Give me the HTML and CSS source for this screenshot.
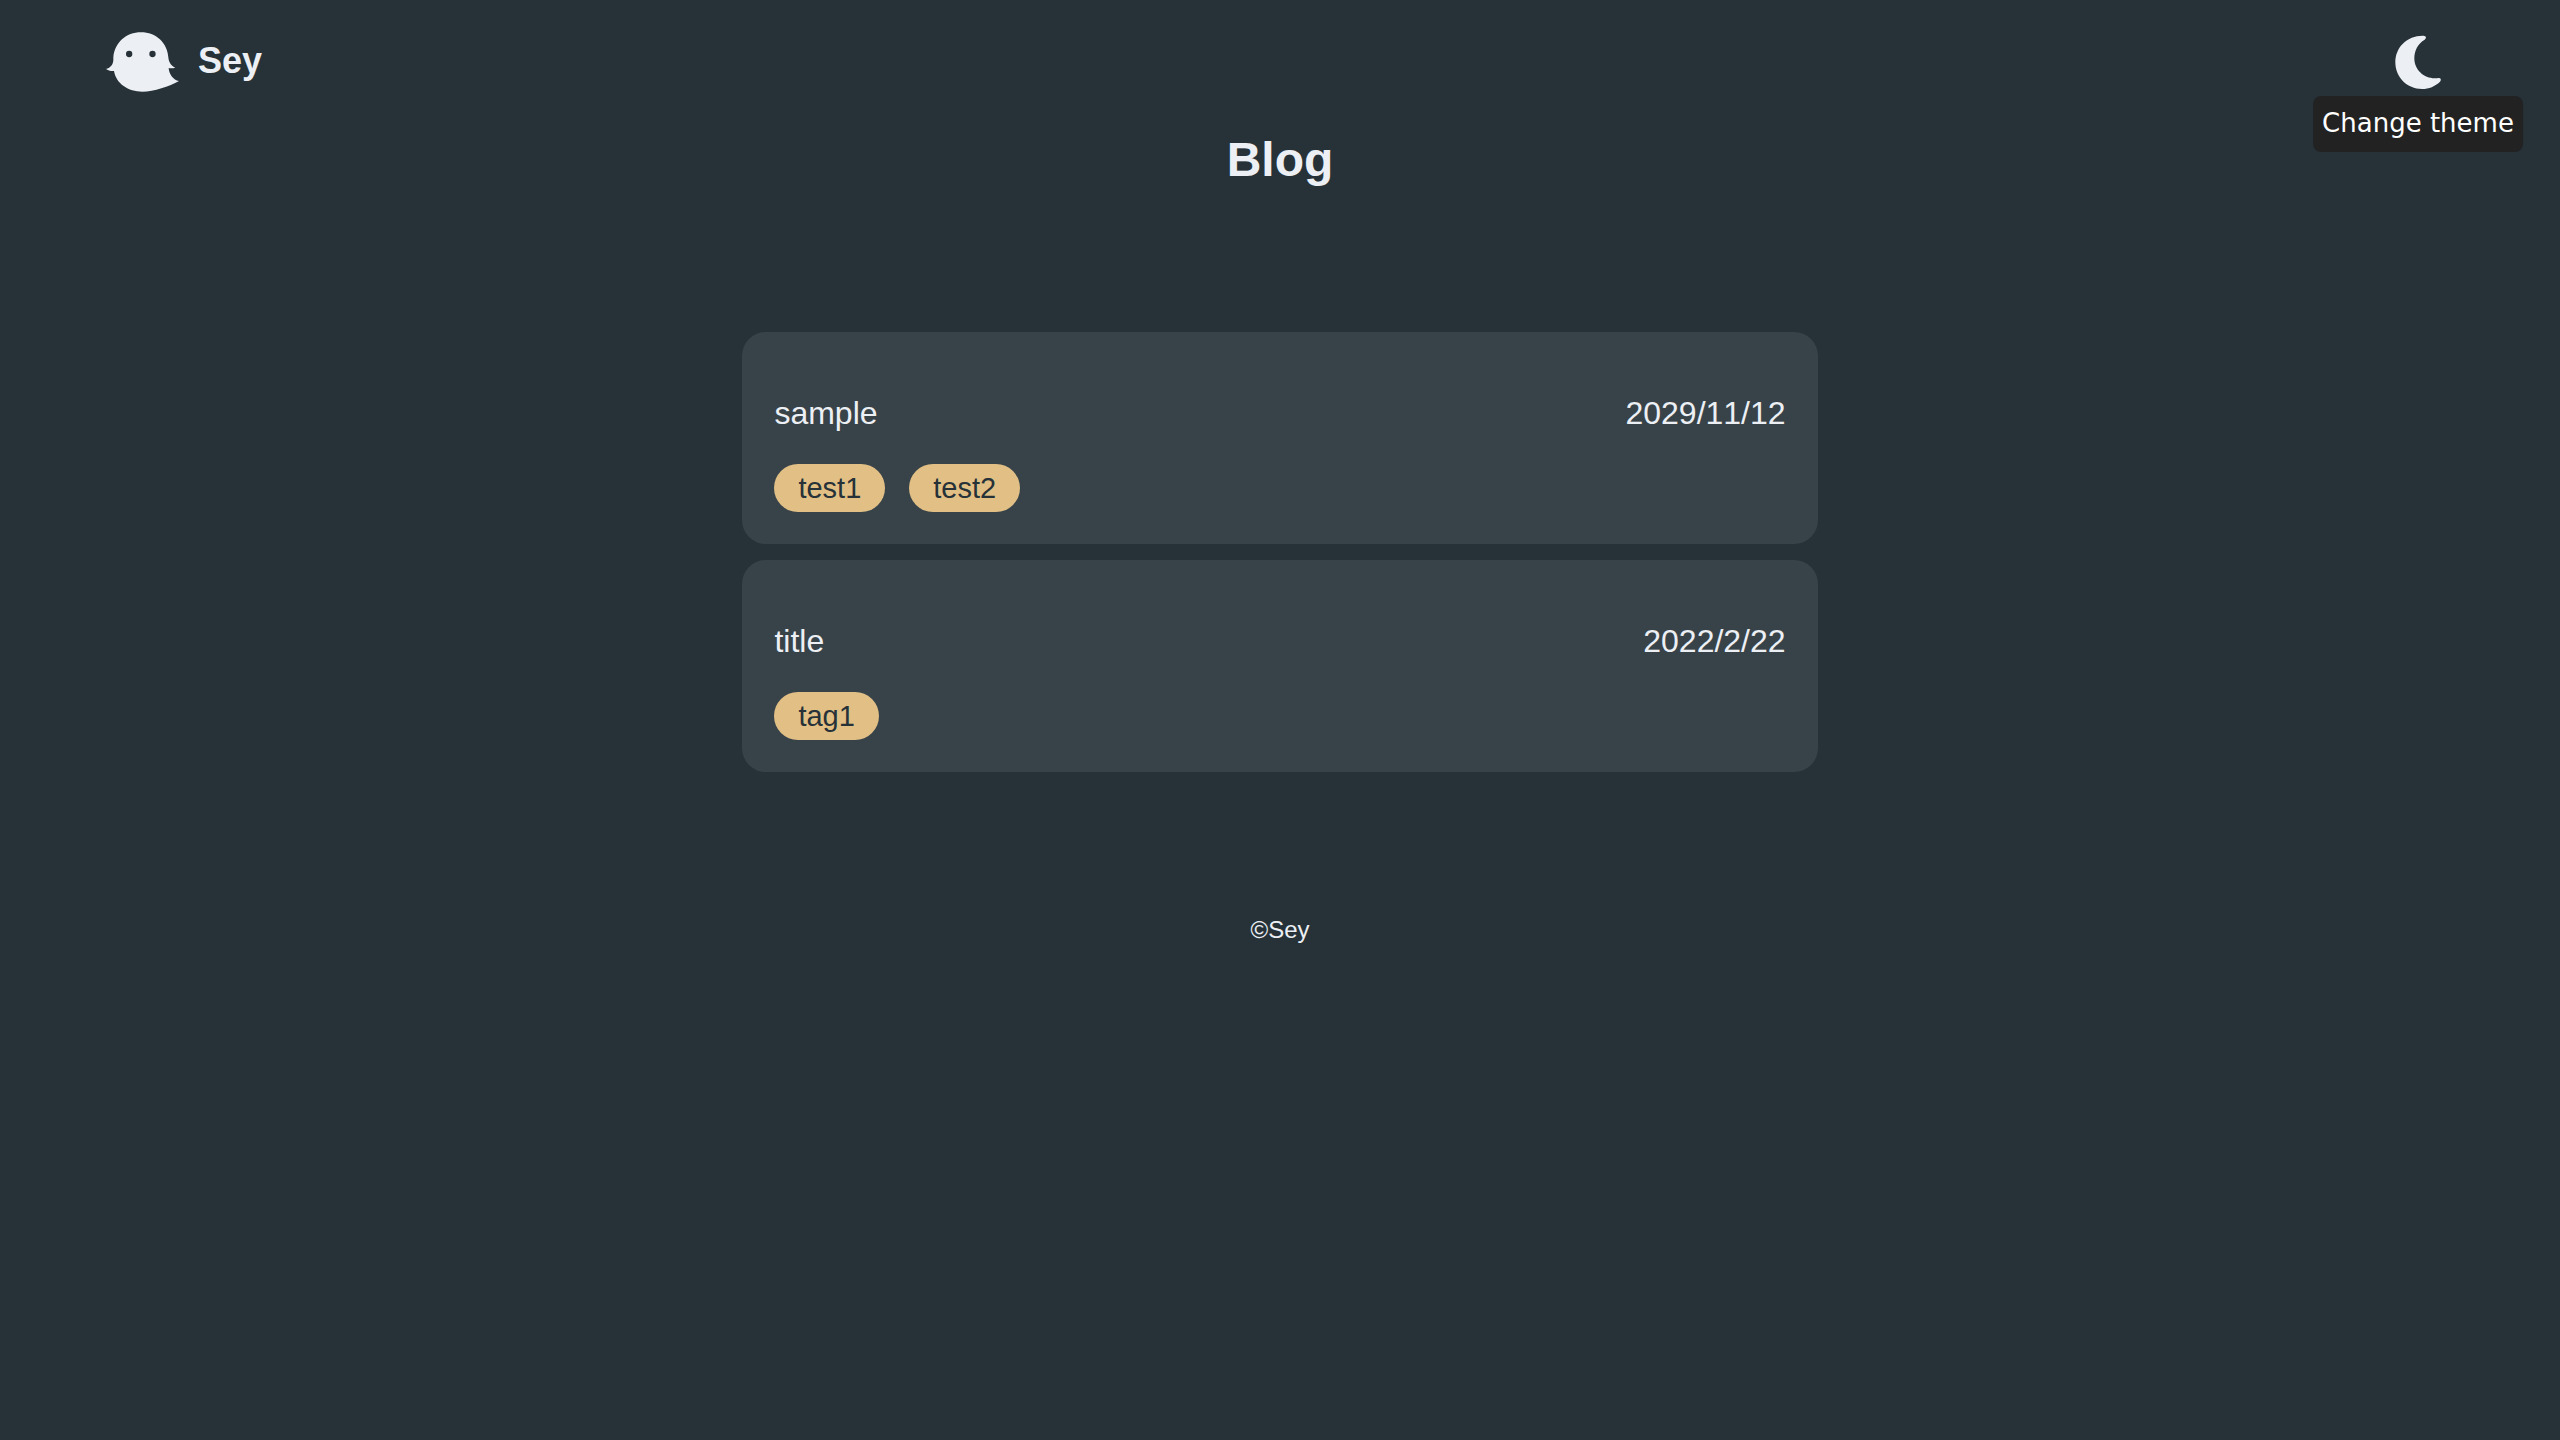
FILE: index.html
```html
<!DOCTYPE html>
<html lang="en">
<head>
<meta charset="utf-8">
<meta name="viewport" content="width=device-width, initial-scale=1">
<title>Blog</title>
<link rel="stylesheet" href="styles.css">
</head>
<body>
<header class="site-header">
  <a class="brand" href="#">
    <svg class="brand-logo" viewBox="48 36 219 180" aria-hidden="true">
      <path class="ghost" d="M70 112C74 68 108 37 153 37C198 37 232 68 235 112C236 126 244 139 256 143C249 145 241 145 236 144C237 162 250 180 267 183C238 199 192 215 157 215C115 215 78 191 72 153C62 154 54 151 48 147C60 144 69 136 70 120Z"/>
      <circle class="eye" cx="117.5" cy="102" r="9.5"/>
      <circle class="eye" cx="187.5" cy="102" r="9.5"/>
    </svg>
    <span class="brand-name">Sey</span>
  </a>
  <button class="theme-toggle" type="button" aria-describedby="theme-tip">
    <svg class="moon" viewBox="315 44 138 162" role="img" aria-label="Dark">
      <path d="M400 46C408 46 411 53 404 58C384 70 373 90 373 114C373 149 402 174 434 174C440 174 443 173 447 173C453 173 454 179 450 184C435 198 417 206 396 206C351 206 316 171 316 126C316 80 352 45 400 46Z"/>
    </svg>
    <span class="tooltip" id="theme-tip" role="tooltip">Change theme</span>
  </button>
</header>
<main class="content">
  <h1 class="page-title">Blog</h1>
  <div class="posts">
    <article class="post">
      <div class="post-head">
        <a class="post-title" href="#">sample</a>
        <time class="post-date" datetime="2029-11-12">2029/11/12</time>
      </div>
      <div class="tags">
        <a class="tag" href="#">test1</a>
        <a class="tag" href="#">test2</a>
      </div>
    </article>
    <article class="post">
      <div class="post-head">
        <a class="post-title" href="#">title</a>
        <time class="post-date" datetime="2022-02-22">2022/2/22</time>
      </div>
      <div class="tags">
        <a class="tag" href="#">tag1</a>
      </div>
    </article>
  </div>
</main>
<footer class="site-footer">©Sey</footer>
</body>
</html>
```
FILE: styles.css
```css
:root {
  --bg: #263238;
  --card: #384349;
  --text: #eceff4;
  --accent: #e2c085;
}

* {
  box-sizing: border-box;
}

body {
  margin: 0;
  background: var(--bg);
  color: var(--text);
  font-family: "Liberation Sans", Arial, sans-serif;
}

a {
  color: inherit;
  text-decoration: none;
}

.site-header {
  display: flex;
  justify-content: space-between;
  align-items: center;
  padding: 32px 119px 0 106px;
}

.brand {
  display: flex;
  gap: 19px;
}

.brand-logo {
  width: 73px;
  height: 60px;
}

.ghost {
  fill: var(--text);
}

.eye {
  fill: var(--bg);
}

.brand-name {
  font-size: 36px;
  font-weight: 700;
  line-height: 58px;
}

.theme-toggle {
  position: relative;
  padding: 0;
  border: 0;
  background: none;
  color: inherit;
  cursor: pointer;
}

.moon {
  display: block;
  width: 46px;
  height: 54px;
  fill: currentColor;
}

.tooltip {
  position: absolute;
  top: calc(100% + 7px);
  left: 50%;
  transform: translateX(-50%);
  padding: 0 9px 2px;
  border-radius: 8px;
  background: #222;
  color: #fff;
  font-family: "DejaVu Sans", sans-serif;
  font-size: 26px;
  line-height: 54px;
  white-space: nowrap;
}

.content {
  display: flex;
  flex-direction: column;
  align-items: center;
}

.page-title {
  margin: 40px 0 144px;
  font-size: 48px;
  line-height: 56px;
}

.posts {
  display: flex;
  flex-direction: column;
  gap: 16px;
  width: 42%;
}

.post {
  padding: 64px 32px 32px;
  border-radius: 24px;
  background: var(--card);
}

.post-head {
  display: flex;
  justify-content: space-between;
  margin-bottom: 34px;
  font-size: 32px;
  line-height: 34px;
}

.post-date {
  font-kerning: none;
}

.tags {
  display: flex;
  flex-wrap: wrap;
  gap: 24px;
}

.tag {
  padding: 0 24px;
  border-radius: 24px;
  background: var(--accent);
  color: var(--bg);
  font-size: 29px;
  line-height: 48px;
}

.site-footer {
  padding: 144px 0 32px;
  font-size: 24px;
  line-height: 28px;
  text-align: center;
}
```
